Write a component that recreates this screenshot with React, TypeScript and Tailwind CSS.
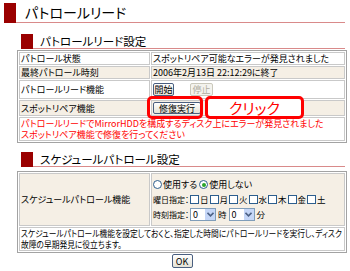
import React from "react";

function XpButton({
  children,
  disabled,
  className,
}: {
  children: React.ReactNode;
  disabled?: boolean;
  className?: string;
}) {
  return (
    <span
      className={
        (disabled
          ? "border-[#cac8bb] text-[#b0ad9f] bg-[#f4f3ee] "
          : "border-[#4a5f80] text-black bg-gradient-to-b from-white to-[#e4e2d6] ") +
        "inline-flex shrink-0 items-center justify-center rounded-[2px] border text-[9px] leading-none whitespace-nowrap " +
        (className ?? "")
      }
    >
      {children}
    </span>
  );
}

function Radio({ checked }: { checked?: boolean }) {
  return (
    <span className="inline-flex shrink-0 items-center justify-center w-[9px] h-[9px] rounded-full border border-[#2c5e8e] bg-white">
      {checked ? <span className="w-[4px] h-[4px] rounded-full bg-[#2aa52a]" /> : null}
    </span>
  );
}

function Check({ label }: { label: string }) {
  return (
    <span className="inline-flex shrink-0 items-center mr-[1px]">
      <span className="w-[9px] h-[9px] border border-[#2c5e8e] bg-white mr-[1px]" />
      <span className="text-[8.5px]">{label}</span>
    </span>
  );
}

function Select() {
  return (
    <span className="inline-flex shrink-0 items-stretch w-[26px] h-[13px] border border-[#7f9db9] bg-white">
      <span className="flex-1 pl-[2px] text-[9px] leading-[11px]">0</span>
      <span className="w-[10px] bg-[#c5d6f7] flex items-center justify-center">
        <svg width="7" height="5" viewBox="0 0 7 5">
          <path d="M0.5 0.8 L3.5 3.8 L6.5 0.8" fill="none" stroke="#4d6185" strokeWidth="1.6" />
        </svg>
      </span>
    </span>
  );
}

function SectionHeader({ title }: { title: string }) {
  return (
    <div className="ml-[17px] flex">
      <div className="w-[12px] h-[15px] bg-[#9a0000]" />
      <div className="flex-1 h-[15px] border-b border-[#d98a8a] pl-[7px] text-[11.5px] leading-[14px] whitespace-nowrap [font-feature-settings:'palt']">
        {title}
      </div>
    </div>
  );
}

export default function App() {
  const cell = "border border-[#c9c9c9] px-[1px] text-[9px] leading-[11px] align-middle whitespace-nowrap";
  return (
    <div className="w-[350px] h-[271px] overflow-hidden bg-white pl-[4px] pr-[5px] pt-[3px] text-black font-['Noto_Sans_CJK_JP',sans-serif]">
      {/* Title */}
      <div className="flex">
        <div className="w-[12px] h-[20px] bg-[#9a0000]" />
        <div className="flex-1 h-[20px] border-b border-[#d98a8a] pl-[9px] text-[14px] leading-[18px] [font-feature-settings:'palt']">
          パトロールリード
        </div>
      </div>

      <div className="mt-[11px]">
        <SectionHeader title="パトロールリード設定" />
      </div>

      <table className="mt-[1px] ml-[13px] w-[330px] table-fixed border border-[#a3a3a3] border-separate border-spacing-[1px] [font-feature-settings:'palt']">
        <tbody>
          <tr>
            <td className={cell + " w-[131px] bg-white"}>パトロール状態</td>
            <td className={cell + " bg-white"}>スポットリペア可能なエラーが発見されました</td>
          </tr>
          <tr>
            <td className={cell + " bg-[#f5efe5]"}>最終パトロール時刻</td>
            <td className={cell + " bg-[#f5efe5]"}>2006年2月13日 22:12:29に終了</td>
          </tr>
          <tr>
            <td className={cell + " bg-white"}>パトロールリード機能</td>
            <td className={cell + " bg-white py-[2px]"}>
              <div className="flex items-center">
                <XpButton className="w-[21px] h-[13px]">開始</XpButton>
                <XpButton disabled className="ml-[16px] w-[23px] h-[13px]">
                  停止
                </XpButton>
              </div>
            </td>
          </tr>
          <tr>
            <td className={cell + " bg-[#f5efe5]"}>スポットリペア機能</td>
            <td className={cell + " bg-[#f5efe5] py-[1px]"}>
              <div className="relative flex items-center">
                <XpButton className="w-[48px] h-[12px]">修復実行</XpButton>
                <div className="absolute left-[-6px] top-[-6px] w-[56px] h-[23px] rounded-[5px] border-[3px] border-[#ff0000]" />
                <div className="absolute left-[52px] top-[-6px] w-[99px] h-[23px] rounded-[5px] border-[3px] border-[#ff0000] bg-white flex items-center justify-center text-[15px] leading-none text-[#ff0000]">
                  クリック
                </div>
              </div>
            </td>
          </tr>
          <tr>
            <td colSpan={2} className={cell + " bg-white text-[#ff0000] text-[8px] leading-[11px]"}>
              パトロールリードでMirrorHDDを構成するディスク上にエラーが発見されました
              <br />
              スポットリペア機能で修復を行ってください
            </td>
          </tr>
        </tbody>
      </table>

      <div className="mt-[9px]">
        <SectionHeader title="スケジュールパトロール設定" />
      </div>

      <table className="mt-[4px] ml-[13px] w-[330px] table-fixed border border-[#a3a3a3] border-separate border-spacing-[1px] [font-feature-settings:'palt']">
        <tbody>
          <tr>
            <td className={cell + " w-[131px] bg-[#f5efe5]"}>スケジュールパトロール機能</td>
            <td className={cell + " bg-[#f5efe5] py-[3px]"}>
              <div className="flex items-center h-[15px]">
                <Radio />
                <span className="ml-[1px] mr-[2px]">使用する</span>
                <Radio checked />
                <span className="ml-[1px]">使用しない</span>
              </div>
              <div className="flex items-center h-[15px]">
                <span className="mr-[1px] shrink-0 text-[8px]">曜日指定：</span>
                <Check label="日" />
                <Check label="月" />
                <Check label="火" />
                <Check label="水" />
                <Check label="木" />
                <Check label="金" />
                <Check label="土" />
              </div>
              <div className="flex items-center h-[15px]">
                <span className="mr-[1px] shrink-0 text-[8px]">時刻指定：</span>
                <Select />
                <span className="mx-[2px] text-[8.5px]">時</span>
                <Select />
                <span className="ml-[2px] text-[8.5px]">分</span>
              </div>
            </td>
          </tr>
          <tr>
            <td colSpan={2} className={cell + " bg-white text-[8px] leading-[11px]"}>
              <span className="block origin-left scale-x-[0.86]">
                スケジュールパトロール機能を設定しておくと、指定した時間にパトロールリードを実行し、ディスク
                <br />
                故障の早期発見に役立ちます。
              </span>
            </td>
          </tr>
        </tbody>
      </table>

      <div className="ml-[13px] w-[330px] flex justify-center mt-[1px]">
        <XpButton className="w-[21px] h-[14px]">OK</XpButton>
      </div>
    </div>
  );
}
